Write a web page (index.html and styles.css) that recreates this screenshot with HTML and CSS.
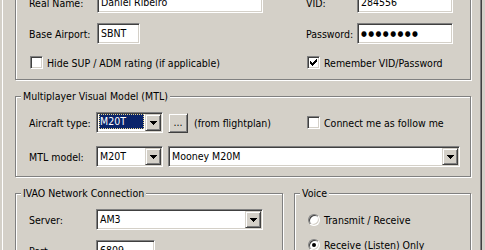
FILE: index.html
```html
<!DOCTYPE html>
<html lang="en">
<head>
    <meta charset="UTF-8">
    <title>IVAO - Connection Settings</title>
    <link rel="stylesheet" href="styles.css">
</head>
<body>
    <div class="page">
        <!-- user identification -->
        <div class="group wide">
            <div class="row">
                <div class="cell-l">
                    <span class="lbl lbl-a">Real Name:</span>
                    <div class="edit w-name">Daniel Ribeiro</div>
                </div>
                <span class="lbl lbl-b">VID:</span>
                <div class="edit w-vid">284556</div>
            </div>
            <div class="row row-2">
                <div class="cell-l">
                    <span class="lbl lbl-a">Base Airport:</span>
                    <div class="edit w-icao">SBNT</div>
                </div>
                <span class="lbl lbl-b">Password:</span>
                <div class="edit w-vid"><span class="pw">●●●●●●●●</span></div>
            </div>
            <div class="row row-chk">
                <div class="cell-l">
                    <span class="check"></span>
                    <span class="chk-text">Hide SUP / ADM rating (if applicable)</span>
                </div>
                <span class="check checked">
                    <svg width="7" height="7" viewBox="0 0 7 7"><path d="M6 0h1v2H5V1h1zM0 2h1v1H0zM4 2h3v1H4zM0 3h2v1H0zM3 3h3v1H3zM0 4h5v1H0zM1 5h3v1H1zM2 6h1v1H2z"/></svg>
                </span>
                <span class="chk-text">Remember VID/Password</span>
            </div>
        </div>

        <!-- MTL -->
        <div class="group wide gap-top">
            <span class="legend">Multiplayer Visual Model (MTL)</span>
            <div class="row">
                <div class="cell-l">
                    <span class="lbl lbl-c">Aircraft type:</span>
                    <div class="combo w-type">
                        <div class="val"><span class="sel">M20T</span></div>
                        <span class="drop"><svg width="7" height="4" viewBox="0 0 7 4"><path d="M0 0h7v1H0zM1 1h5v1H1zM2 2h3v1H2zM3 3h1v1H3z"/></svg></span>
                    </div>
                    <span class="btn">...</span>
                    <span class="note">(from flightplan)</span>
                </div>
                <span class="check"></span>
                <span class="chk-text">Connect me as follow me</span>
            </div>
            <div class="row row-mtl">
                <span class="lbl lbl-c">MTL model:</span>
                <div class="combo w-type">
                    <div class="val">M20T</div>
                    <span class="drop"><svg width="7" height="4" viewBox="0 0 7 4"><path d="M0 0h7v1H0zM1 1h5v1H1zM2 2h3v1H2zM3 3h1v1H3z"/></svg></span>
                </div>
                <div class="combo w-model">
                    <div class="val">Mooney M20M</div>
                    <span class="drop"><svg width="7" height="4" viewBox="0 0 7 4"><path d="M0 0h7v1H0zM1 1h5v1H1zM2 2h3v1H2zM3 3h1v1H3z"/></svg></span>
                </div>
            </div>
        </div>

        <div class="bottom">
            <!-- network -->
            <div class="group net">
                <span class="legend">IVAO Network Connection</span>
                <div class="row">
                    <span class="lbl lbl-c">Server:</span>
                    <div class="combo w-server">
                        <div class="val">AM3</div>
                        <span class="drop"><svg width="7" height="4" viewBox="0 0 7 4"><path d="M0 0h7v1H0zM1 1h5v1H1zM2 2h3v1H2zM3 3h1v1H3z"/></svg></span>
                    </div>
                </div>
                <div class="row row-port">
                    <span class="lbl lbl-c">Port:</span>
                    <div class="edit w-port">6809</div>
                </div>
            </div>

            <!-- voice -->
            <div class="group voice">
                <span class="legend">Voice</span>
                <div class="radio-row">
                    <span class="radio"></span>
                    <span class="chk-text">Transmit / Receive</span>
                </div>
                <div class="radio-row row-radio2">
                    <span class="radio on"></span>
                    <span class="chk-text">Receive (Listen) Only</span>
                </div>
            </div>
        </div>
    </div>
</body>
</html>
```

FILE: styles.css
```css
body {
    margin: 0;
    background: #d4d0c8;
    color: #000;
    font-family: "DejaVu Sans Condensed", "DejaVu Sans", sans-serif;
    font-stretch: semi-condensed;
    font-size: 10.5px;
    overflow: hidden;
}
.page {
    margin: -30px 0 0 2px;
    width: 480px;
    min-height: 340px;
    box-sizing: border-box;
    border-left: 1px solid #fff;
    border-right: 1px solid #404040;
    box-shadow: inset -1px 0 #808080;
    padding-left: 12px;
}

/* etched group box */
.group {
    box-sizing: border-box;
    border: 1px solid #808080;
    box-shadow: 1px 1px 0 #fff, inset 1px 1px 0 #fff;
    padding: 0 0 9px 13px;
}
.wide {
    width: 456px;
}
.wide:first-child {
    padding: 21px 0 10px 13px;
}
.gap-top {
    margin-top: 16px;
}
.legend {
    display: table;
    margin: -7px 0 9px -8px;
    padding: 0 2px;
    line-height: 13px;
    background: #d4d0c8;
}

.row {
    display: flex;
    align-items: center;
    height: 21px;
}
.row-2 {
    margin-top: 10px;
}
.row-chk {
    height: 13px;
    margin-top: 12px;
}
.row-mtl {
    margin-top: 13px;
}
.row-port {
    margin-top: 10px;
}
.cell-l {
    display: flex;
    align-items: center;
    width: 277px;
    flex: none;
}
.lbl {
    flex: none;
}
.lbl-a { width: 68px; }
.lbl-b { width: 51px; }
.lbl-c { width: 67px; }

/* sunken 3d controls */
.edit, .combo {
    box-sizing: border-box;
    height: 21px;
    background: #fff;
    border: 1px solid;
    border-color: #808080 #fff #fff #808080;
    box-shadow: inset 1px 1px 0 #404040, inset -1px -1px 0 #d4d0c8;
    flex: none;
}
.edit {
    padding: 0 3px;
    line-height: 19px;
    white-space: nowrap;
    overflow: hidden;
}
.w-name { width: 166px; }
.w-icao { width: 43px; }
.w-vid { width: 96px; }
.w-port { width: 59px; }
.w-type { width: 67px; }
.w-model { width: 292px; margin-left: 5px; }
.w-server { width: 167px; }

.pw {
    font-size: 7.5px;
    letter-spacing: 1.4px;
    vertical-align: top;
}

.combo {
    display: flex;
    padding: 1px;
}
.combo .val {
    flex: 1;
    padding: 1px 0 0 2px;
    line-height: 15px;
    overflow: hidden;
}
.combo .sel {
    display: block;
    height: 15px;
    margin: -1px 1px 0 -1px;
    padding-left: 1px;
    box-sizing: border-box;
    background: #0a246a;
    color: #fff;
    outline: 1px dotted #e8d58c;
    outline-offset: -1px;
}
.drop, .btn {
    box-sizing: border-box;
    background: #d4d0c8;
    border: 1px solid;
    border-color: #d4d0c8 #404040 #404040 #d4d0c8;
    box-shadow: inset 1px 1px 0 #fff, inset -1px -1px 0 #808080;
}
.drop {
    width: 16px;
    height: 17px;
    display: flex;
    align-items: center;
    justify-content: center;
    flex: none;
}
.drop svg, .check svg {
    display: block;
}
.btn {
    width: 20px;
    height: 20px;
    margin-left: 5px;
    text-align: center;
    line-height: 17px;
    flex: none;
}
.note {
    margin-left: 6px;
    white-space: nowrap;
}

/* checkbox and radio */
.check {
    box-sizing: border-box;
    width: 13px;
    height: 13px;
    margin-left: 1px;
    background: #fff;
    border: 1px solid;
    border-color: #808080 #fff #fff #808080;
    box-shadow: inset 1px 1px 0 #404040, inset -1px -1px 0 #d4d0c8;
    display: flex;
    align-items: center;
    justify-content: center;
    flex: none;
}
.chk-text {
    margin-left: 4px;
    white-space: nowrap;
}
.radio-row {
    display: flex;
    align-items: center;
    height: 17px;
}
.row-radio2 {
    margin-top: 8px;
}
.radio {
    box-sizing: border-box;
    width: 12px;
    height: 12px;
    border-radius: 50%;
    background: #fff;
    border: 1px solid;
    border-color: #808080 #fff #fff #808080;
    box-shadow: inset 1px 1px 0 #404040, inset -1px -1px 0 #d4d0c8;
    display: flex;
    align-items: center;
    justify-content: center;
    flex: none;
}
.radio.on::after {
    content: "";
    width: 4px;
    height: 4px;
    border-radius: 50%;
    background: #000;
}

.bottom {
    display: flex;
    gap: 11px;
    margin-top: 16px;
}
.net {
    width: 268px;
}
.voice {
    width: 177px;
}
.voice .legend {
    margin-bottom: 11px;
}
```
